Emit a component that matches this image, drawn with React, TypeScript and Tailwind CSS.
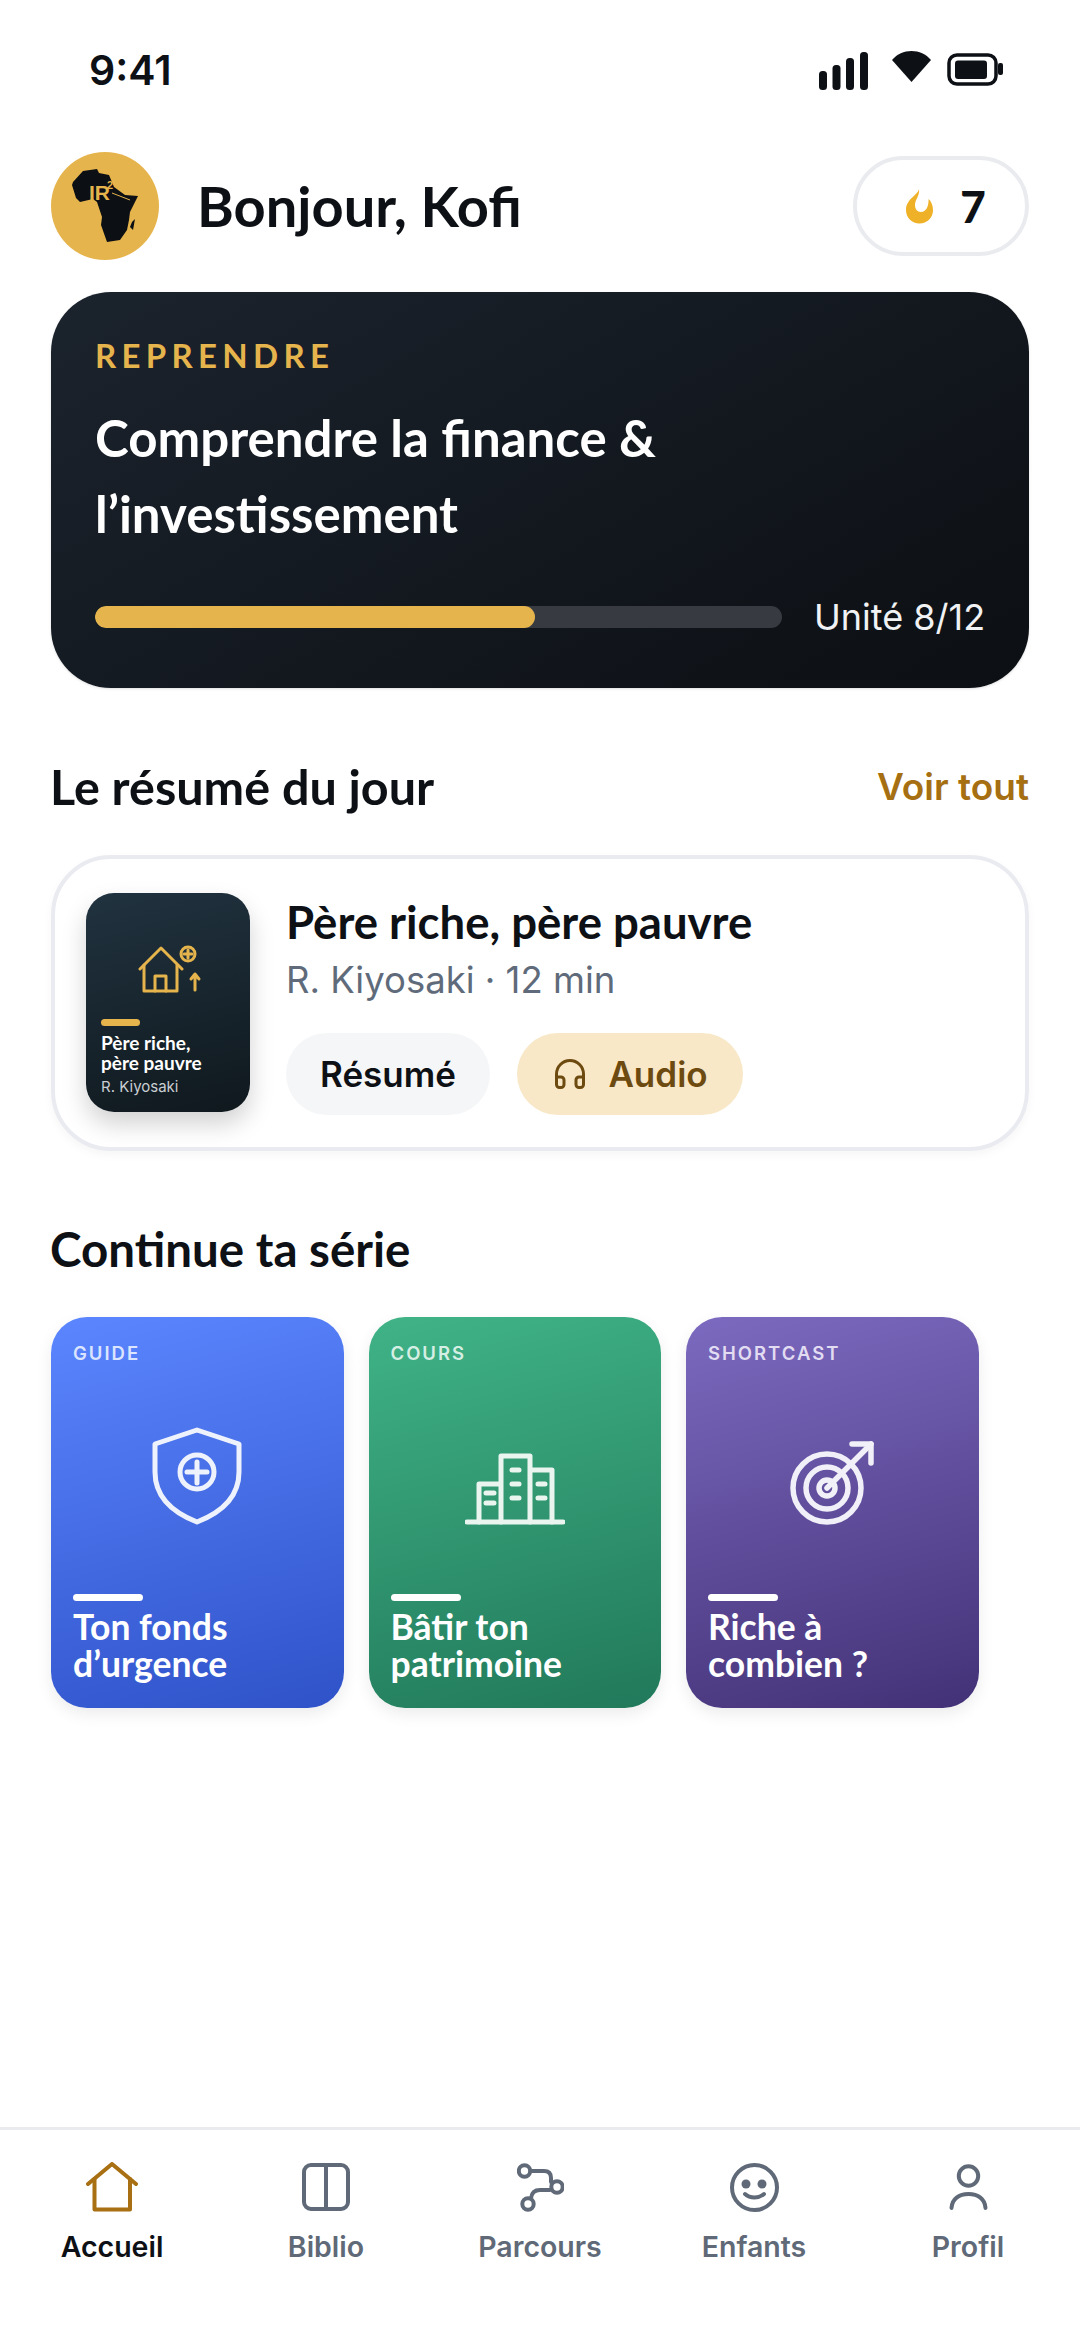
import React from "react";

const head = "font-['Lato','Open_Sans',sans-serif]";

function Signal() {
  return (
    <svg width="49" height="38" viewBox="0 0 49 38" fill="#0d1015">
      <rect x="0" y="19" width="8" height="19" rx="3.5" />
      <rect x="13.5" y="13" width="8" height="25" rx="3.5" />
      <rect x="27" y="6" width="8" height="32" rx="3.5" />
      <rect x="41" y="0" width="8" height="38" rx="3.5" />
    </svg>
  );
}
function Wifi() {
  return (
    <svg width="39" height="31" viewBox="0 0 39 31" fill="#0d1015">
      <path d="M0 9C5 3 12 0 19.500 0s14.500 3 19.500 9L19.500 31z" />
    </svg>
  );
}
function Battery() {
  return (
    <svg width="56" height="33" viewBox="0 0 56 33" fill="none">
      <rect x="2" y="2" width="47" height="29" rx="8" stroke="#0d1015" strokeWidth="3.5" />
      <rect x="8" y="7.500" width="32" height="18.500" rx="3" fill="#0d1015" />
      <rect x="51" y="10" width="5" height="12" rx="2" fill="#0d1015" />
    </svg>
  );
}
function Logo() {
  return (
    <div className="relative w-[108px] h-[108px] rounded-full bg-[#e6b44c] shrink-0">
      <svg className="absolute inset-0" width="108" height="108" viewBox="0 0 108 108" fill="#0c0f14">
        <path d="M32 19 L46 17 L48 21 L58 23 L63 35 L74 43 L87 44 L79 60 L78 68 L76 78 L69 88 L56 90 L50 73 L51 65 L46 50 L42 47 L29 50 L25 46 L21 33 L22 30z" />
        <path d="M84 67 L82 78 L79 75 L81 70z" />
      </svg>
      <span className="absolute left-[38px] top-[30px] text-[21px] leading-[22px] font-bold text-[#e6b44c] font-['Liberation_Sans',sans-serif]">IR</span>
      <span className="absolute left-[56px] top-[27px] text-[11px] leading-[12px] font-bold text-[#e6b44c] font-['Liberation_Sans',sans-serif]">2</span>
      <svg className="absolute inset-0" width="108" height="108" viewBox="0 0 108 108" fill="none">
        <path d="M61 41 L79 48" stroke="#e6b44c" strokeWidth="1" />
      </svg>
    </div>
  );
}
function Flame() {
  return (
    <svg width="27" height="35" viewBox="0 0 27 35">
      <path fill="#efb128" d="M13 0C12 6 0 10 0 21C0 29 6 34.500 13.500 34.500C21 34.500 27 29 27 21C27 16 25 12 22.500 10C23 17 20 23 15 23C11 23 9 20 9 16C9 10 14 7 13 0z" />
    </svg>
  );
}
function BookIcon() {
  return (
    <svg width="66" height="48" viewBox="0 0 66 48" fill="none" stroke="#e6b44c" strokeWidth="3" strokeLinecap="round" strokeLinejoin="round">
      <path d="M2 24 L23 3 L44 24" />
      <path d="M6 20 V46 H39 V20" />
      <path d="M17 46 V31 H28 V46" />
      <circle cx="50" cy="9" r="7" fill="#1f303c" />
      <path d="M50 5 V13 M46 9 H54" />
      <path d="M57 45 V30 M53 34 L57 29 L61 34" />
    </svg>
  );
}
function Headphones() {
  return (
    <svg width="36" height="36" viewBox="0 0 24 24" fill="none" stroke="#6d4a0f" strokeWidth="2" strokeLinecap="round" strokeLinejoin="round">
      <path d="M3 14h3a2 2 0 0 1 2 2v3a2 2 0 0 1-2 2H5a2 2 0 0 1-2-2v-7a9 9 0 0 1 18 0v7a2 2 0 0 1-2 2h-1a2 2 0 0 1-2-2v-3a2 2 0 0 1 2-2h3" />
    </svg>
  );
}
function Shield() {
  return (
    <svg width="90" height="98" viewBox="0 0 90 98" fill="none" stroke="#eef2fc" strokeWidth="5" strokeLinecap="round" strokeLinejoin="round">
      <path d="M45 3 L87 17 V45 C87 71 68 86 45 95 C22 86 3 71 3 45 V17z" />
      <circle cx="45" cy="45" r="17" />
      <path d="M45 35 V56 M35 45 H55" />
    </svg>
  );
}
function Buildings() {
  return (
    <svg width="100" height="72" viewBox="0 0 100 72" fill="none" stroke="#eaf5f0" strokeWidth="5" strokeLinecap="round" strokeLinejoin="round">
      <path d="M2 69 H98" />
      <path d="M14 69 V31 H36 M36 69 V3 H65 V69 M65 17 H87 V69" />
      <path d="M21 40 H29 M21 50 H29 M47 17 H54 M47 31 H54 M47 45 H54 M73 31 H80 M73 45 H80" />
    </svg>
  );
}
function Target() {
  return (
    <svg width="84" height="84" viewBox="0 0 84 84" fill="none" stroke="#f1f0f8" strokeWidth="5.500" strokeLinecap="round" strokeLinejoin="round">
      <circle cx="37" cy="47" r="34" />
      <circle cx="37" cy="47" r="21" />
      <circle cx="37" cy="47" r="8" />
      <path d="M37 47 L81 3" />
      <path d="M62 3 H81 V22" />
    </svg>
  );
}
const navIcon = "#5f6977";
function NavHome() {
  return (
    <svg width="52" height="50" viewBox="0 0 52 50" fill="none" stroke="#a86f13" strokeWidth="4" strokeLinecap="round" strokeLinejoin="round">
      <path d="M2 22 L26 2 L50 22" />
      <path d="M8.500 17 V47.500 H44 V17" />
    </svg>
  );
}
function NavBook() {
  return (
    <svg width="48" height="48" viewBox="0 0 48 48" fill="none" stroke={navIcon} strokeWidth="4" strokeLinejoin="round">
      <rect x="2" y="2" width="44" height="44" rx="7" />
      <path d="M24 2 V46" />
    </svg>
  );
}
function NavRoute() {
  return (
    <svg width="47" height="49" viewBox="0 0 47 49" fill="none" stroke={navIcon} strokeWidth="4" strokeLinecap="round">
      <circle cx="7.500" cy="8" r="5.700" />
      <circle cx="40" cy="24" r="5.700" />
      <circle cx="11" cy="41" r="5.700" />
      <path d="M14 8 H27 Q34 8 34 15 V19" />
      <path d="M33 27 H23 Q15 27 14 35" />
    </svg>
  );
}
function NavFace() {
  return (
    <svg width="49" height="49" viewBox="0 0 49 49" fill="none" stroke={navIcon} strokeWidth="4" strokeLinecap="round">
      <circle cx="24.500" cy="24.500" r="22.500" />
      <circle cx="16" cy="21" r="4.500" fill={navIcon} stroke="none" />
      <circle cx="32" cy="21" r="4.500" fill={navIcon} stroke="none" />
      <path d="M15 31 C20 35.500 29 35.500 34 31" />
    </svg>
  );
}
function NavUser() {
  return (
    <svg width="39" height="46" viewBox="0 0 39 46" fill="none" stroke={navIcon} strokeWidth="4" strokeLinecap="round">
      <circle cx="19.500" cy="12" r="9.700" />
      <path d="M2.500 44 C3 35 10 30 19.500 30 C29 30 36 35 36.500 44" />
    </svg>
  );
}

const series = [
  { tag: "GUIDE", bg: "bg-[linear-gradient(165deg,#5b86ff,#2f52c8)]", icon: <Shield />, lines: ["Ton fonds", "d’urgence"], tagc: "text-[#dbe5ff]" },
  { tag: "COURS", bg: "bg-[linear-gradient(165deg,#40b387,#21795a)]", icon: <Buildings />, lines: ["Bâtir ton", "patrimoine"], tagc: "text-[#d5efe4]" },
  { tag: "SHORTCAST", bg: "bg-[linear-gradient(165deg,#7c6ac0,#433177)]", icon: <Target />, lines: ["Riche à", "combien ?"], tagc: "text-[#e2dcf2]" },
];
const nav = [
  { label: "Accueil", icon: <NavHome />, active: true },
  { label: "Biblio", icon: <NavBook /> },
  { label: "Parcours", icon: <NavRoute /> },
  { label: "Enfants", icon: <NavFace /> },
  { label: "Profil", icon: <NavUser /> },
];

export default function App() {
  return (
    <div className="w-[1080px] h-[2338px] bg-white flex flex-col font-['Inter',sans-serif] text-[#0d1015] overflow-hidden">
      <div className="h-[150px] pl-[89px] pr-[77px] pt-[46px] flex justify-between items-start">
        <span className="text-[41px] leading-[48px] font-semibold">9:41</span>
        <div className="flex items-start">
          <div className="mt-[6px]"><Signal /></div>
          <div className="mt-[5px] ml-[24px]"><Wifi /></div>
          <div className="mt-[7px] ml-[16px]"><Battery /></div>
        </div>
      </div>
      <div className="px-[51px]">
        <div className="flex items-center justify-between h-[120px] mt-[-4px]">
          <div className="flex items-center gap-[38px]">
            <Logo />
            <h1 className={`${head} text-[56px] font-bold leading-[60px]`}>Bonjour, Kofi</h1>
          </div>
          <div className="w-[176px] h-[100px] rounded-full border-4 border-[#e9ebef] flex items-center justify-center gap-[27px] pl-[10px]">
            <Flame />
            <span className={`${head} text-[44px] font-black`}>7</span>
          </div>
        </div>
        <div className="mt-[26px] h-[396px] rounded-[60px] bg-[linear-gradient(150deg,#1b232d,#0c0f13)] px-[44px] pt-[43px] shadow-sm">
          <div className={`${head} text-[33px] leading-[40px] font-bold tracking-[5.300px] text-[#e6b44c]`}>REPRENDRE</div>
          <div className={`${head} mt-[25px] text-[51px] leading-[76px] font-bold text-white`}>
            Comprendre la finance &amp;<br />l’investissement
          </div>
          <div className="mt-[43px] flex items-center gap-[32px]">
            <div className="w-[687px] h-[22px] rounded-full bg-[#373a40] overflow-hidden shrink-0">
              <div className="w-[440px] h-full rounded-full bg-[#e6b44c]" />
            </div>
            <span className="text-[36px] leading-[44px] text-[#f1f2f4] whitespace-nowrap">Unité 8/12</span>
          </div>
        </div>

        <div className="mt-[70px] flex items-center justify-between">
          <h2 className={`${head} -ml-px text-[48.500px] leading-[56px] font-bold`}>Le résumé du jour</h2>
          <span className="mt-[2px] text-[37px] leading-[44px] font-semibold text-[#a56f12]">Voir tout</span>
        </div>

        <div className="mt-[41px] h-[296px] rounded-[60px] border-4 border-[#eaebf0] shadow-[0_4px_10px_rgba(0,0,0,0.04)] pl-[31px] pt-[34px] flex gap-[36px]">
          <div className="w-[164px] h-[219px] rounded-[28px] bg-[linear-gradient(165deg,#213340,#0f181d)] shadow-[0_12px_24px_rgba(0,0,0,0.18)] px-[15px] shrink-0 flex flex-col">
            <div className="h-[100px] pl-[5px] flex items-end justify-center"><BookIcon /></div>
            <div className="mt-[26px] w-[39px] h-[7px] rounded-full bg-[#e6b44c]" />
            <div className={`${head} mt-[7px] text-[19px] leading-[20px] font-bold text-white`}>Père riche,<br />père pauvre</div>
            <div className="mt-[5px] text-[15px] leading-[18px] text-[#c9ced2]">R. Kiyosaki</div>
          </div>
          <div>
            <div className={`${head} text-[45.500px] leading-[54px] font-bold mt-[2px]`}>Père riche, père pauvre</div>
            <div className="text-[36.500px] leading-[44px] text-[#5f6b7a] mt-[9px]">R. Kiyosaki · 12 min</div>
            <div className="mt-[31px] flex gap-[27px]">
              <div className="h-[82px] w-[204px] rounded-full bg-[#f5f6f8] flex items-center justify-center text-[35px] font-semibold">Résumé</div>
              <div className="h-[82px] w-[226px] rounded-full bg-[#f8e8c7] flex items-center justify-center gap-[20px] text-[35px] font-semibold text-[#6d4a0f]">
                <Headphones />Audio
              </div>
            </div>
          </div>
        </div>

        <h2 className={`${head} -ml-px mt-[70px] text-[47.500px] leading-[56px] font-bold`}>Continue ta série</h2>

        <div className="mt-[40px] flex gap-[25px]">
          {series.map((s) => (
            <div key={s.tag} className={`${s.bg} w-[292.500px] h-[391px] rounded-[36px] shadow-[0_6px_16px_rgba(0,0,0,0.08)] px-[22px] pt-[24px] flex flex-col shrink-0`}>
              <div className={`${s.tagc} text-[18.500px] leading-[24px] font-semibold tracking-[2px]`}>{s.tag}</div>
              <div className="h-[170px] mt-[-6px] flex items-end justify-center pb-[4px]">{s.icon}</div>
              <div className="mt-[65px] w-[70px] h-[7px] rounded-full bg-white" />
              <div className={`${head} mt-[7px] text-[35.500px] leading-[37px] font-bold text-white whitespace-nowrap`}>
                {s.lines[0]}<br />{s.lines[1]}
              </div>
            </div>
          ))}
        </div>
      </div>

      <div className="mt-auto h-[211px] border-t-[3px] border-[#e9ebef] grid grid-cols-5 px-[5px] pt-[30px]">
        {nav.map((n) => (
          <div key={n.label} className="flex flex-col items-center">
            <div className="h-[54px] flex items-center justify-center">{n.icon}</div>
            <span className={`mt-[16px] text-[28.500px] leading-[34px] font-semibold ${n.active ? "text-[#0d1015]" : "text-[#5f6977]"}`}>{n.label}</span>
          </div>
        ))}
      </div>
    </div>
  );
}
